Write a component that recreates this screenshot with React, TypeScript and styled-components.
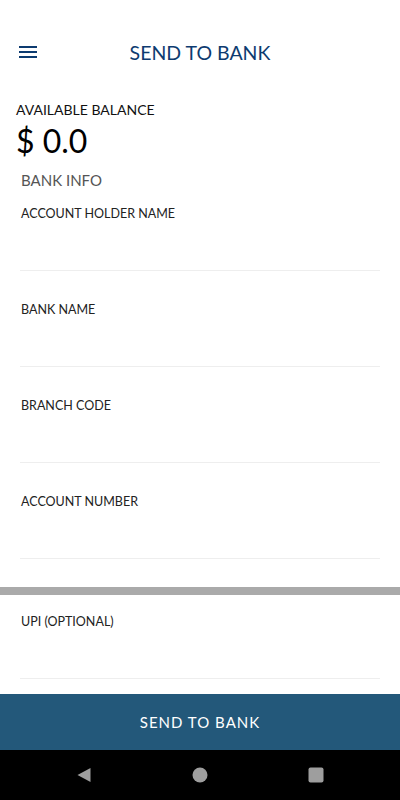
import React from 'react';
import styled, { createGlobalStyle } from 'styled-components';

const palette = {
  navy: '#0d3b70',
  button: '#23587a',
  textPrimary: '#111111',
  textSecondary: '#555555',
  divider: '#eeeeee',
  band: '#aaaaaa',
  navIcon: '#9e9e9e',
};

const GlobalStyle = createGlobalStyle`
  html, body {
    margin: 0;
    padding: 0;
    background: #fff;
  }
  body {
    font-family: Lato, "Open Sans", "Liberation Sans", sans-serif;
  }
`;

const Screen = styled.div`
  width: 400px;
  height: 800px;
  display: flex;
  flex-direction: column;
  background: #fff;
  overflow: hidden;
`;

const StatusSpace = styled.div`
  height: 30px;
  flex-shrink: 0;
`;

const Header = styled.header`
  height: 44px;
  display: grid;
  grid-template-columns: 56px 1fr 56px;
  align-items: center;
  flex-shrink: 0;
`;

const MenuButton = styled.button`
  background: none;
  border: none;
  padding: 0 0 0 19px;
  height: 44px;
  display: flex;
  align-items: center;
  cursor: pointer;
`;

const Title = styled.h1`
  margin: 0;
  text-align: center;
  font-size: 19.5px;
  font-weight: 400;
  color: ${palette.navy};
`;

const Balance = styled.section`
  padding: 27px 16px 0;
  display: flex;
  flex-direction: column;
`;

const BalanceLabel = styled.div`
  font-size: 14px;
  line-height: 17px;
  color: ${palette.textPrimary};
`;

const BalanceValue = styled.div`
  font-size: 32px;
  line-height: 38px;
  color: #000;
  margin-top: 4px;
`;

const SectionTitle = styled.div`
  font-size: 15px;
  line-height: 20px;
  color: ${palette.textSecondary};
  padding-left: 5px;
  margin-top: 10px;
`;

const Form = styled.div`
  display: flex;
  flex-direction: column;
  gap: 29px;
  padding: 0 20px;
  margin-top: 14px;
`;

const Field = styled.label`
  display: flex;
  flex-direction: column;
  border-bottom: 1px solid ${palette.divider};
`;

const FieldLabel = styled.span`
  font-size: 12.5px;
  line-height: 16px;
  color: #222;
  padding: 2px 0 0 1px;
`;

const FieldInput = styled.input`
  height: 48px;
  border: none;
  outline: none;
  padding: 0;
  font-family: inherit;
  font-size: 15px;
  background: transparent;
`;

const Band = styled.div`
  height: 8px;
  background: ${palette.band};
  margin-top: 28px;
  flex-shrink: 0;
`;

const OptionalForm = styled(Form)`
  margin-top: 17px;
`;

const Spacer = styled.div`
  flex: 1;
`;

const SubmitButton = styled.button`
  height: 56px;
  flex-shrink: 0;
  border: none;
  background: ${palette.button};
  color: #fff;
  font-family: inherit;
  font-size: 15px;
  letter-spacing: 1px;
  cursor: pointer;
`;

const NavBar = styled.nav`
  height: 50px;
  flex-shrink: 0;
  background: #000;
  display: grid;
  grid-template-columns: repeat(3, 1fr);
  align-items: center;
  justify-items: center;
  padding: 0 26px;
`;

const NavIcon = styled.svg`
  width: 16px;
  height: 16px;
  fill: ${palette.navIcon};
`;

const fields = ['ACCOUNT HOLDER NAME', 'BANK NAME', 'BRANCH CODE', 'ACCOUNT NUMBER'];

export default function App() {
  return (
    <>
      <GlobalStyle />
      <Screen>
        <StatusSpace />
        <Header>
          <MenuButton aria-label="menu">
            <svg width="18" height="14" viewBox="0 0 18 14">
              <rect x="0" y="1" width="18" height="2" fill={palette.navy} />
              <rect x="0" y="6" width="18" height="2" fill={palette.navy} />
              <rect x="0" y="11" width="18" height="2" fill={palette.navy} />
            </svg>
          </MenuButton>
          <Title>SEND TO BANK</Title>
          <div />
        </Header>
        <Balance>
          <BalanceLabel>AVAILABLE BALANCE</BalanceLabel>
          <BalanceValue>$ 0.0</BalanceValue>
          <SectionTitle>BANK INFO</SectionTitle>
        </Balance>
        <Form>
          {fields.map((f) => (
            <Field key={f}>
              <FieldLabel>{f}</FieldLabel>
              <FieldInput />
            </Field>
          ))}
        </Form>
        <Band />
        <OptionalForm>
          <Field>
            <FieldLabel>UPI (OPTIONAL)</FieldLabel>
            <FieldInput />
          </Field>
        </OptionalForm>
        <Spacer />
        <SubmitButton>SEND TO BANK</SubmitButton>
        <NavBar>
          <NavIcon viewBox="0 0 16 16">
            <path d="M14.5 1 L14.5 15 L1.5 8 Z" />
          </NavIcon>
          <NavIcon viewBox="0 0 16 16">
            <circle cx="8" cy="8" r="7.5" />
          </NavIcon>
          <NavIcon viewBox="0 0 16 16">
            <rect x="0.5" y="0.5" width="15" height="15" rx="2" />
          </NavIcon>
        </NavBar>
      </Screen>
    </>
  );
}
